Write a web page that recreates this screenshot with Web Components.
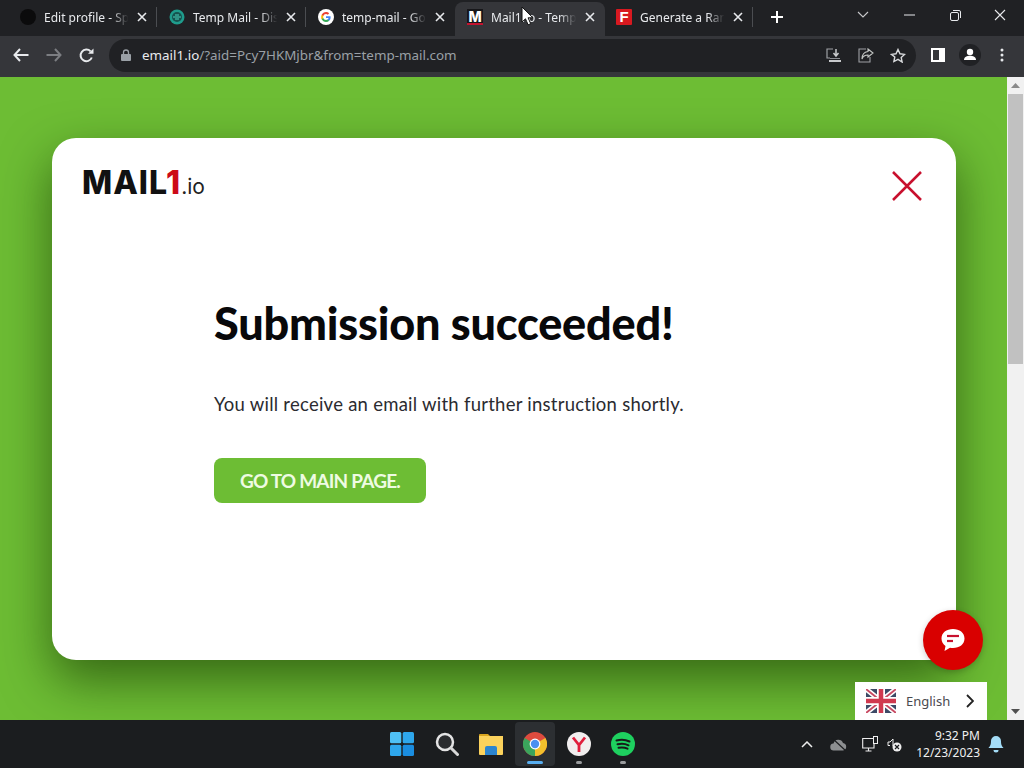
<!DOCTYPE html>
<html lang="en">
<head>
<meta charset="utf-8">
<title>Mail1.io</title>
<style>
  html, body { margin: 0; height: 100%; overflow: hidden; background: #202124; }
  body { font-family: "Noto Sans", sans-serif; }
</style>
</head>
<body>
<browser-window>
  <tab-strip></tab-strip>
  <nav-toolbar></nav-toolbar>
  <page-view>
    <success-card></success-card>
    <chat-button slot="overlay"></chat-button>
    <language-picker slot="overlay"></language-picker>
  </page-view>
  <win-taskbar></win-taskbar>
</browser-window>

<script>
const X_ICON = `<svg width="10" height="10" viewBox="0 0 10 10"><path d="M1 1l8 8M9 1l-8 8" stroke="#e8eaed" stroke-width="1.6" fill="none"/></svg>`;

class BrowserWindow extends HTMLElement {
  constructor() {
    super();
    this.attachShadow({ mode: 'open' });
    this.shadowRoot.innerHTML = `
      <style>
        :host { display: flex; flex-direction: column; width: 1024px; height: 768px; position: relative; overflow: hidden; }
        .cursor { position: absolute; left: 521px; top: 6px; }
      </style>
      <slot></slot>
      <svg class="cursor" width="13" height="20" viewBox="0 0 13 20">
        <path d="M1 1v15l3.5-3.2 2.6 6 2.6-1.1-2.6-5.9h4.8z" fill="#fff" stroke="#111" stroke-width="1"/>
      </svg>
    `;
  }
}

class TabStrip extends HTMLElement {
  constructor() {
    super();
    this.attachShadow({ mode: 'open' });
    const tabs = [
      { title: 'Edit profile - Sp', icon: `<svg width="16" height="16"><circle cx="8" cy="8" r="8" fill="#0b0b0c"/></svg>`, sep: true },
      { title: 'Temp Mail - Dis', icon: `<svg width="16" height="16" viewBox="0 0 16 16"><circle cx="8" cy="8" r="7.5" fill="#1f9c8c"/><circle cx="8" cy="8" r="5" fill="#16534f"/><path d="M4 8h8M6 6h4M6 10h4" stroke="#4ad3bd" stroke-width="1"/></svg>`, sep: true },
      { title: 'temp-mail - Go', icon: `<svg width="16" height="16" viewBox="0 0 16 16"><circle cx="8" cy="8" r="8" fill="#fff"/><path d="M12.6 8.2c0-.4 0-.7-.1-1H8v1.9h2.6c-.1.6-.5 1.200-1 1.500v1.200h1.600c1-.9 1.400-2.200 1.400-3.600z" fill="#4285f4"/><path d="M8 13c1.300 0 2.400-.4 3.200-1.200l-1.600-1.200c-.4.300-1 .5-1.600.5-1.300 0-2.300-.8-2.700-2H3.700v1.200C4.500 11.900 6.100 13 8 13z" fill="#34a853"/><path d="M5.300 9.100c-.2-.7-.2-1.400 0-2.100V5.800H3.700c-.7 1.400-.7 3.100 0 4.500z" fill="#fbbc05"/><path d="M8 5c.7 0 1.300.2 1.800.7l1.400-1.400C10.400 3.500 9.200 3 8 3 6.100 3 4.500 4.100 3.700 5.800L5.300 7c.4-1.200 1.400-2 2.700-2z" fill="#ea4335"/></svg>`, sep: false },
      { title: 'Mail1.io - Temp', active: true, icon: `<span class="fav-m">M</span>`, sep: false },
      { title: 'Generate a Ran', icon: `<span class="fav-f">F</span>`, sep: true }
    ];
    this.shadowRoot.innerHTML = `
      <style>
        :host { display: flex; align-items: flex-end; height: 36px; background: #202124; color: #e8eaed; font: 12px "Noto Sans", sans-serif; padding-left: 8px; box-sizing: border-box; flex: none; }
        .tab { width: 149px; height: 34px; box-sizing: border-box; display: flex; align-items: center; padding: 0 10px 4px 12px; position: relative; flex: none; }
        .tab:first-child { width: 150px; }
        .tab.active { background: #35363a; border-radius: 8px 8px 0 0; width: 150px; margin-right: -1px; }
        .tab.sep::after { content: ""; position: absolute; right: 0; top: 5px; height: 20px; width: 1px; background: #4b4d51; }
        .fav { width: 16px; height: 16px; flex: none; display: flex; }
        .title { margin-left: 8px; flex: 1; white-space: nowrap; overflow: hidden; -webkit-mask-image: linear-gradient(90deg, #000 78%, transparent 98%); mask-image: linear-gradient(90deg, #000 78%, transparent 98%); }
        .close { margin-left: 7px; display: flex; flex: none; width: 10px; }
        .fav-m { width: 16px; height: 16px; background: #17171a; color: #fff; font: 800 14px/16px "Inter", sans-serif; text-align: center; box-shadow: inset 0 -2px 0 #c4122f; }
        .fav-f { width: 16px; height: 16px; background: #d81920; color: #fff; font: 800 15px/16px "Liberation Sans", sans-serif; text-align: center; border-radius: 1px; }
        .plus { margin-left: 17px; margin-bottom: 12px; display: flex; }
        .controls { margin-left: auto; align-self: flex-start; display: flex; align-items: center; height: 30px; }
        .controls span { width: 46px; display: flex; justify-content: center; }
      </style>
      ${tabs.map(t => `
        <div class="tab${t.active ? ' active' : ''}${t.sep ? ' sep' : ''}">
          <span class="fav">${t.icon}</span>
          <span class="title">${t.title}</span>
          <span class="close">${X_ICON}</span>
        </div>`).join('')}
      <span class="plus"><svg width="14" height="14" viewBox="0 0 14 14"><path d="M7 1v12M1 7h12" stroke="#fff" stroke-width="2"/></svg></span>
      <div class="controls">
        <span><svg width="12" height="8" viewBox="0 0 12 8"><path d="M1 1l5 5 5-5" stroke="#c8c9cb" stroke-width="1.100" fill="none"/></svg></span>
        <span><svg width="11" height="2" viewBox="0 0 11 2"><path d="M0 1h11" stroke="#e8eaed" stroke-width="1"/></svg></span>
        <span><svg width="11" height="11" viewBox="0 0 11 11"><rect x=".5" y="2.500" width="8" height="8" rx="1.500" stroke="#e8eaed" fill="none"/><path d="M3 .5h6a1.500 1.500 0 0 1 1.500 1.500v6" stroke="#e8eaed" fill="none"/></svg></span>
        <span style="width:44px;margin-right:2px"><svg width="12" height="12" viewBox="0 0 12 12"><path d="M1 1l10 10M11 1L1 11" stroke="#e8eaed" stroke-width="1.100"/></svg></span>
      </div>
    `;
  }
}

class NavToolbar extends HTMLElement {
  constructor() {
    super();
    this.attachShadow({ mode: 'open' });
    this.shadowRoot.innerHTML = `
      <style>
        :host { display: flex; align-items: center; height: 41px; background: #35363a; box-sizing: border-box; padding: 0 0 3px 5px; flex: none; color: #e8eaed; }
        .btn { width: 32px; height: 32px; display: flex; align-items: center; justify-content: center; flex: none; }
        .url { margin: 0 6px 0 7px; flex: none; width: 807px; height: 33px; box-sizing: border-box; background: #202124; border-radius: 17px; display: flex; align-items: center; padding-left: 12px; font: 13.400px "Noto Sans", sans-serif; color: #9aa0a6; white-space: nowrap; }
        .url svg.lock { margin-right: 11px; }
        .url b { font-weight: 400; color: #e8eaed; }
        .spacer { flex: 1; }
        .in { width: 32px; display: flex; justify-content: center; flex: none; }
        .end { width: 2px; flex: none; }
      </style>
      <span class="btn"><svg width="16" height="14" viewBox="0 0 16 14"><path d="M7 1L1.500 7 7 13M2 7h13.500" stroke="#e8eaed" stroke-width="2" fill="none"/></svg></span>
      <span class="btn" style="margin-left:1px"><svg width="16" height="14" viewBox="0 0 16 14"><path d="M9 1l5.500 6L9 13M14 7H.5" stroke="#7c7e82" stroke-width="2" fill="none"/></svg></span>
      <span class="btn"><svg width="15" height="15" viewBox="0 0 15 15"><path d="M12.800 9.500A5.800 5.800 0 1 1 11.600 3.400" stroke="#e8eaed" stroke-width="2" fill="none"/><path d="M9 5.800h5.500V.5z" fill="#e8eaed"/></svg></span>
      <div class="url">
        <svg class="lock" width="10" height="12" viewBox="0 0 10 12"><rect x="0" y="5" width="10" height="7" rx="1" fill="#9aa0a6"/><path d="M2.500 5V3.500a2.500 2.500 0 0 1 5 0V5" stroke="#9aa0a6" stroke-width="1.300" fill="none"/></svg>
        <span><b>email1.io</b>/?aid=Pcy7HKMjbr&amp;from=temp-mail.com</span>
        <span class="spacer"></span>
        <span class="in"><svg width="16" height="15" viewBox="0 0 16 15"><path d="M7 1H1v9h3" stroke="#9da0a4" stroke-width="1.200" fill="none"/><path d="M10 1v6M7.500 5L10 8l2.500-3" stroke="#c8cacc" stroke-width="1.500" fill="none"/><path d="M3 12h12v2H3z" fill="#c8cacc"/><path d="M4 10h10v1H4z" fill="#8a8c90"/></svg></span>
        <span class="in"><svg width="16" height="15" viewBox="0 0 16 15"><path d="M8 1h-7v13h11V9" stroke="#9da0a4" stroke-width="1.100" fill="none"/><path d="M10 1l5 4-5 4V7C7 7 5 8 4 11c0-4 2-7 6-7.500z" stroke="#c4c7c5" stroke-width="1.100" fill="none"/></svg></span>
        <span class="in"><svg width="16" height="15" viewBox="0 0 16 15"><path d="M8 1.500l2 4.300 4.600.6-3.400 3.100.9 4.500L8 11.300l-4.100 2.200.9-4.500L1.400 6.400 6 5.800z" stroke="#d8dadc" stroke-width="1.400" fill="none"/></svg></span>
        <span class="end"></span>
      </div>
      <span class="btn"><svg width="14" height="14" viewBox="0 0 14 14"><rect x="1" y="1" width="12" height="12" fill="none" stroke="#fff" stroke-width="2"/><rect x="8" y="1" width="5" height="12" fill="#fff"/></svg></span>
      <span class="btn"><svg width="22" height="22" viewBox="0 0 22 22"><circle cx="11" cy="11" r="11" fill="#202124"/><circle cx="11" cy="8" r="3.200" fill="#fff"/><path d="M5 16c0-3 3-4.300 6-4.300s6 1.300 6 4.300z" fill="#fff"/></svg></span>
      <span class="btn"><svg width="4" height="14" viewBox="0 0 4 14"><circle cx="2" cy="2" r="1.500" fill="#e8eaed"/><circle cx="2" cy="7" r="1.500" fill="#e8eaed"/><circle cx="2" cy="12" r="1.500" fill="#e8eaed"/></svg></span>
    `;
  }
}

class PageView extends HTMLElement {
  constructor() {
    super();
    this.attachShadow({ mode: 'open' });
    this.shadowRoot.innerHTML = `
      <style>
        :host { display: flex; flex: 1; min-height: 0; position: relative; background: #6dbd34; overflow: hidden; }
        .content { flex: 1; padding: 61px 51px 0 52px; min-width: 0; box-sizing: border-box; }
        .bar { width: 17px; flex: none; background: #f1f1f1; display: flex; flex-direction: column; align-items: center; }
        .arrow { height: 17px; display: flex; align-items: center; justify-content: center; flex: none; }
        .thumb { width: 15px; height: 270px; background: #c1c1c1; flex: none; }
        .fill { flex: 1; }
      </style>
      <div class="content"><slot></slot></div>
      <div class="bar">
        <span class="arrow"><svg width="9" height="5" viewBox="0 0 9 5"><path d="M4.500 0L9 5H0z" fill="#8a8a8a"/></svg></span>
        <span class="thumb"></span>
        <span class="fill"></span>
        <span class="arrow"><svg width="9" height="5" viewBox="0 0 9 5"><path d="M4.500 5L9 0H0z" fill="#505050"/></svg></span>
      </div>
      <slot name="overlay"></slot>
    `;
  }
}

class SuccessCard extends HTMLElement {
  constructor() {
    super();
    this.attachShadow({ mode: 'open' });
    this.shadowRoot.innerHTML = `
      <style>
        :host { display: block; height: 522px; background: #fff; border-radius: 24px; box-shadow: 0 20px 50px rgba(20, 50, 0, .62); box-sizing: border-box; padding: 27px 34px 0 30px; color: #0b0b0d; font-family: "Lato", sans-serif; }
        header { display: flex; justify-content: space-between; align-items: flex-start; }
        .logo { font: 800 32px/35px "Inter", sans-serif; letter-spacing: 1px; color: #111; display: flex; align-items: baseline; }
        .logo i { font-style: normal; color: #cc0a17; margin-left: -2px; }
        .logo small { font: 400 21px/1 "Inter", sans-serif; color: #222; letter-spacing: 0; }
        .close { margin-top: 6px; display: flex; }
        main { padding: 94px 0 0 132px; }
        h1 { font: 900 45px/56px "Lato", sans-serif; letter-spacing: -.2px; margin: 0; color: #08080a; white-space: nowrap; }
        p { font: 400 18.500px/26px "Lato", sans-serif; margin: 40px 0 0; color: #2b2b30; letter-spacing: .25px; white-space: nowrap; }
        .go { display: inline-flex; align-items: center; justify-content: center; margin-top: 41px; width: 212px; height: 45px; border-radius: 8px; background: #6dbd34; color: #eefbe2; font: 700 19px "Lato", sans-serif; letter-spacing: -.8px; border: 0; padding: 0; }
      </style>
      <header>
        <div class="logo">MAIL<i>1</i><small>.io</small></div>
        <span class="close"><svg width="30" height="30" viewBox="0 0 30 30"><path d="M1 1l28 28M29 1L1 29" stroke="#c8102e" stroke-width="2.500" fill="none"/></svg></span>
      </header>
      <main>
        <h1>Submission succeeded!</h1>
        <p>You will receive an email with further instruction shortly.</p>
        <button class="go">GO TO MAIN PAGE.</button>
      </main>
    `;
  }
}

class ChatButton extends HTMLElement {
  constructor() {
    super();
    this.attachShadow({ mode: 'open' });
    this.shadowRoot.innerHTML = `
      <style>
        :host { position: absolute; left: 923px; top: 533px; width: 60px; height: 60px; border-radius: 50%; background: #d90000; display: flex; align-items: center; justify-content: center; box-shadow: 0 2px 6px rgba(0, 0, 0, .2); }
      </style>
      <svg width="26" height="26" viewBox="0 0 26 26">
        <path d="M13 2c6.500 0 11.500 3.800 11.500 9.500S19.500 21 13 21c-1 0-2 0-3-.3L4.500 24l1-5C3 17.300 1.500 14.800 1.500 11.500 1.500 5.800 6.500 2 13 2z" fill="#fff"/>
        <path d="M7 9h12" stroke="#c8102e" stroke-width="2.200"/>
        <path d="M7 14h6" stroke="#c8102e" stroke-width="2.200"/>
      </svg>
    `;
  }
}

class LanguagePicker extends HTMLElement {
  constructor() {
    super();
    this.attachShadow({ mode: 'open' });
    this.shadowRoot.innerHTML = `
      <style>
        :host { position: absolute; left: 855px; top: 605px; width: 132px; height: 38px; background: #fff; display: flex; align-items: center; box-sizing: border-box; padding-left: 11px; font: 13px "Noto Sans", sans-serif; color: #4a4a4f; }
        span { margin-left: 10px; flex: 1; }
        svg.c { margin-right: 13px; }
      </style>
      <svg width="30" height="24" viewBox="0 0 30 24">
        <rect width="30" height="24" fill="#f3f3f3"/>
        <path d="M0 0h30v24H0z" fill="#3d4a66"/>
        <path d="M0 0l30 24M30 0L0 24" stroke="#fff" stroke-width="5"/>
        <path d="M0 0l30 24M30 0L0 24" stroke="#c94a63" stroke-width="1.800"/>
        <path d="M15 0v24M0 12h30" stroke="#fff" stroke-width="8"/>
        <path d="M15 0v24M0 12h30" stroke="#d0394f" stroke-width="4.500"/>
      </svg>
      <span>English</span>
      <svg class="c" width="8" height="14" viewBox="0 0 8 14"><path d="M1 1l6 6-6 6" stroke="#222" stroke-width="1.800" fill="none"/></svg>
    `;
  }
}

class WinTaskbar extends HTMLElement {
  constructor() {
    super();
    this.attachShadow({ mode: 'open' });
    this.shadowRoot.innerHTML = `
      <style>
        :host { display: grid; grid-template-columns: 1fr auto 1fr; align-items: center; height: 48px; background: #1b1d1f; flex: none; color: #f0f0f0; font: 12px/17px "Noto Sans", sans-serif; }
        .apps { grid-column: 2; display: flex; align-items: center; padding-left: 2px; }
        .app { width: 44px; height: 44px; display: flex; align-items: center; justify-content: center; position: relative; border-radius: 4px; }
        .app:first-child { margin: 0 1px 0 -1px; }
        .app.on { background: #2c2f32; width: 40px; margin: 0 2px; }
        .app.on::after { content: ""; position: absolute; bottom: 2px; left: 12px; width: 16px; height: 3px; border-radius: 2px; background: #58aef0; }
        .app.run::after { content: ""; position: absolute; bottom: 2px; left: 19px; width: 6px; height: 3px; border-radius: 2px; background: #9a9c9e; }
        .tray { grid-column: 3; display: flex; align-items: center; justify-content: flex-end; padding-right: 20px; }
        .ico { display: flex; justify-content: center; }
        .clock { text-align: right; margin-left: 14px; white-space: nowrap; }
        .bell { margin-left: 8px; display: flex; }
      </style>
      <div class="apps">
        <span class="app"><svg width="24" height="24" viewBox="0 0 24 24"><rect x="0" y="0" width="11.300" height="11.300" rx="1.500" fill="#4fc1f5"/><rect x="12.700" y="0" width="11.300" height="11.300" rx="1.500" fill="#2ea7ec"/><rect x="0" y="12.700" width="11.300" height="11.300" rx="1.500" fill="#2ea7ec"/><rect x="12.700" y="12.700" width="11.300" height="11.300" rx="1.500" fill="#1a8de0"/></svg></span>
        <span class="app"><svg width="24" height="24" viewBox="0 0 24 24"><circle cx="10" cy="10" r="8" fill="#2a2c2e" stroke="#e4e4e4" stroke-width="2.500"/><path d="M16 16l6.500 6.500" stroke="#d8d8d8" stroke-width="3" stroke-linecap="round"/></svg></span>
        <span class="app"><svg width="24" height="22" viewBox="0 0 24 22"><path d="M0 2a1 1 0 0 1 1-1h8l2 2h-11z" fill="#d9a520"/><path d="M0 3h24v18a1 1 0 0 1-1 1H1a1 1 0 0 1-1-1z" fill="#fbd25c"/><path d="M6 15a2 2 0 0 1 2-2h8a2 2 0 0 1 2 2v7H6z" fill="#2c85cf"/></svg></span>
        <span class="app on"><svg width="24" height="24" viewBox="0 0 24 24"><circle cx="12" cy="12" r="12" fill="#dd4b3e"/><path d="M12 12L22.400 6A12 12 0 0 1 12 24z" fill="#f3c02c"/><path d="M12 12l0 12A12 12 0 0 1 1.600 6z" fill="#3ba55c"/><circle cx="12" cy="12" r="5.400" fill="#fff"/><circle cx="12" cy="12" r="4.200" fill="#4c8ff0"/></svg></span>
        <span class="app run"><svg width="24" height="24" viewBox="0 0 24 24"><circle cx="12" cy="12" r="12" fill="#f1eeee"/><path d="M6 5.500l6 7.500 6-7.500M12 13v7" stroke="#e01f3d" stroke-width="2.800" fill="none"/></svg></span>
        <span class="app run"><svg width="24" height="24" viewBox="0 0 24 24"><circle cx="12" cy="12" r="12" fill="#1ed05f"/><path d="M5.500 8.500c4.500-1.300 9-1 13 1M6.500 12.300c3.800-1 7.500-.8 11 1M7.500 15.800c3-.7 6-.6 9 .9" stroke="#18191a" stroke-width="2" stroke-linecap="round" fill="none"/></svg></span>
      </div>
      <div class="tray">
        <span class="ico" style="margin-right:17px"><svg width="12" height="7" viewBox="0 0 12 7"><path d="M1 6l5-5 5 5" stroke="#eee" stroke-width="1.500" fill="none"/></svg></span>
        <span class="ico" style="margin-right:15px"><svg width="17" height="13" viewBox="0 0 17 13"><path d="M4 12.500a3.500 3.500 0 0 1-.5-7A5 5 0 0 1 13 5a3.800 3.800 0 0 1 0 7.500z" fill="#8d8f91"/><path d="M2 0l14 13" stroke="#1b1d1f" stroke-width="1.200"/></svg></span>
        <span class="ico" style="margin-right:9px"><svg width="16" height="16" viewBox="0 0 16 16"><path d="M11 2.500H.7v9.500H12V7" stroke="#eee" stroke-width="1.100" fill="none"/><path d="M6.500 12v2.500M3.500 15h6" stroke="#eee" stroke-width="1.100"/><rect x="11.500" y=".5" width="4" height="7" stroke="#eee" fill="none"/></svg></span>
        <span class="ico"><svg width="15" height="15" viewBox="0 0 15 15"><path d="M1 5h2l3-3v7" stroke="#eee" stroke-width="1" fill="none"/><path d="M1 5v3.500h2" stroke="#eee" stroke-width="1" fill="none"/><circle cx="10" cy="10" r="4.500" fill="#eee"/><path d="M8 8l4 4M12 8l-4 4" stroke="#1b1d1f" stroke-width="1.200"/></svg></span>
        <div class="clock">9:32 PM<br>12/23/2023</div>
        <span class="bell"><svg width="16" height="17" viewBox="0 0 16 17"><path d="M8 0a5 5 0 0 1 5 5c0 4 1 5 2.500 7H.5C2 10 3 9 3 5a5 5 0 0 1 5-5z" fill="#a4dcf6"/><path d="M5.500 14a2.500 2.500 0 0 0 5 0z" fill="#a4dcf6"/></svg></span>
      </div>
    `;
  }
}

customElements.define('browser-window', BrowserWindow);
customElements.define('tab-strip', TabStrip);
customElements.define('nav-toolbar', NavToolbar);
customElements.define('page-view', PageView);
customElements.define('success-card', SuccessCard);
customElements.define('chat-button', ChatButton);
customElements.define('language-picker', LanguagePicker);
customElements.define('win-taskbar', WinTaskbar);
</script>
</body>
</html>
